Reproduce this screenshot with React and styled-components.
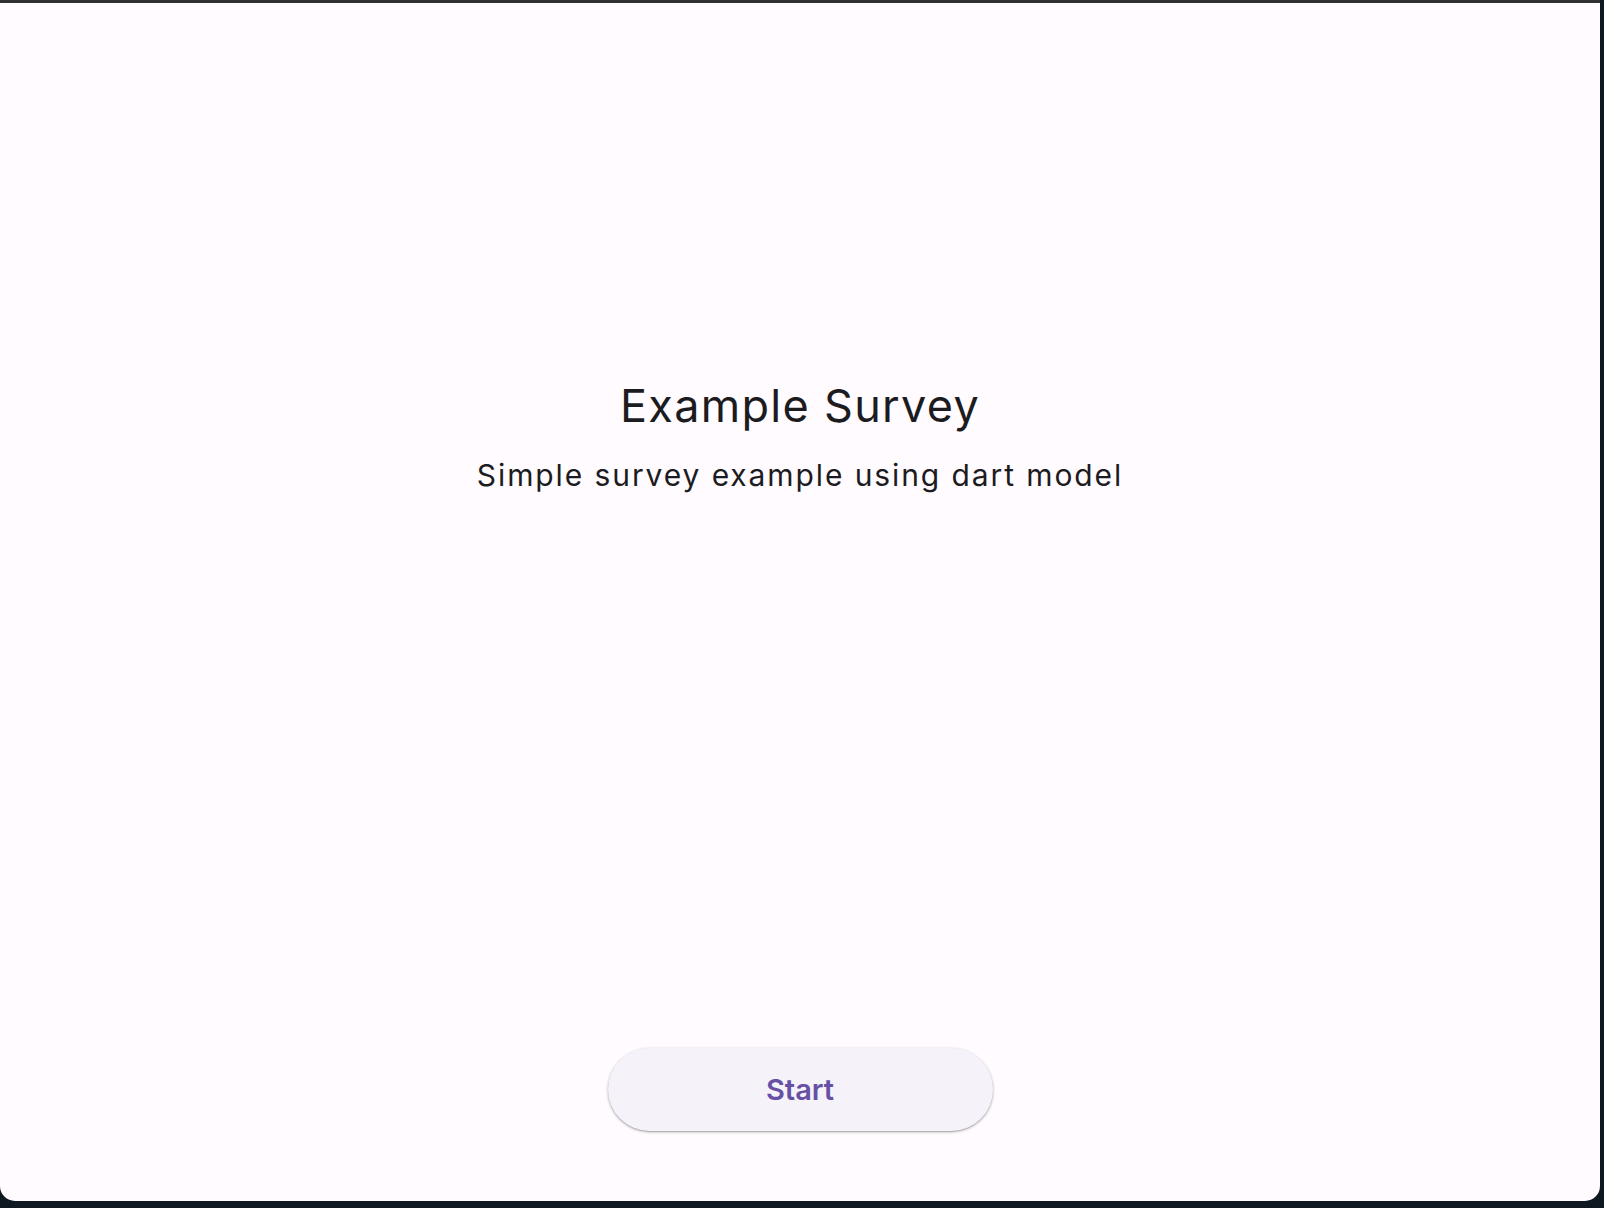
import React from "react";
import styled, { createGlobalStyle } from "styled-components";

const Global = createGlobalStyle`
  html, body { margin: 0; padding: 0; }
  body {
    background: #0d1820;
    font-family: Inter, "Noto Sans", sans-serif;
    width: 1604px;
    height: 1208px;
    overflow: hidden;
  }
`;

const Screen = styled.div`
  width: 1604px;
  height: 1208px;
  display: flex;
  flex-direction: column;
  align-items: flex-start;
  background: #0d1820;
`;

const Window = styled.main`
  box-sizing: border-box;
  width: 1600px;
  height: 1201px;
  border-top: 3px solid #2e3032;
  background: #fffbfe;
  border-radius: 0 0 15px 15px;
  display: flex;
  flex-direction: column;
  align-items: center;
  padding: 377px 0 70px;
`;

const Hero = styled.section`
  display: flex;
  flex-direction: column;
  align-items: center;
  flex: 1;
  gap: 25px;
`;

const Title = styled.h1`
  margin: 0;
  font-size: 45px;
  line-height: 52px;
  font-weight: 400;
  color: #1c1b1f;
  letter-spacing: 1.3px;
`;

const Subtitle = styled.p`
  margin: 0;
  font-size: 30px;
  line-height: 36px;
  font-weight: 400;
  color: #1c1b1f;
  letter-spacing: 1.9px;
`;

const StartButton = styled.button`
  width: 385px;
  height: 83px;
  border: none;
  border-radius: 42px;
  background: #f5f2f9;
  box-shadow: 0 1px 3px rgba(0, 0, 0, 0.3), 0 1px 1px rgba(0, 0, 0, 0.12);
  color: #6750a4;
  font-family: Inter, "Noto Sans", sans-serif;
  font-size: 29px;
  font-weight: 600;
  letter-spacing: 0;
  cursor: pointer;
`;

export default function App() {
  return (
    <>
      <Global />
      <Screen>
        <Window>
          <Hero>
            <Title>Example Survey</Title>
            <Subtitle>Simple survey example using dart model</Subtitle>
          </Hero>
          <StartButton>Start</StartButton>
        </Window>
      </Screen>
    </>
  );
}
